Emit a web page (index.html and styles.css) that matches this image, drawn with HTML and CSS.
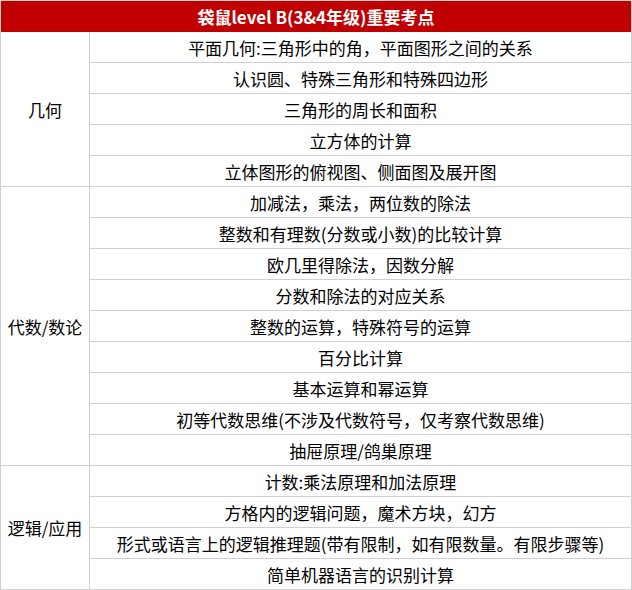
FILE: index.html
```html
<!DOCTYPE html>
<html lang="zh-CN">
<head>
<meta charset="utf-8">
<title>袋鼠level B重要考点</title>
<link rel="stylesheet" href="styles.css">
</head>
<body>
<div class="sheet">
  <div class="title">袋鼠level B(3&amp;4年级)重要考点</div>
  <section class="group">
    <div class="cat">几何</div>
    <div class="items">
      <div class="item">平面几何:三角形中的角，平面图形之间的关系</div>
      <div class="item">认识圆、特殊三角形和特殊四边形</div>
      <div class="item">三角形的周长和面积</div>
      <div class="item">立方体的计算</div>
      <div class="item">立体图形的俯视图、侧面图及展开图</div>
    </div>
  </section>
  <section class="group">
    <div class="cat">代数/数论</div>
    <div class="items">
      <div class="item">加减法，乘法，两位数的除法</div>
      <div class="item">整数和有理数(分数或小数)的比较计算</div>
      <div class="item">欧几里得除法，因数分解</div>
      <div class="item">分数和除法的对应关系</div>
      <div class="item">整数的运算，特殊符号的运算</div>
      <div class="item">百分比计算</div>
      <div class="item">基本运算和幂运算</div>
      <div class="item">初等代数思维(不涉及代数符号，仅考察代数思维)</div>
      <div class="item">抽屉原理/鸽巢原理</div>
    </div>
  </section>
  <section class="group">
    <div class="cat">逻辑/应用</div>
    <div class="items">
      <div class="item">计数:乘法原理和加法原理</div>
      <div class="item">方格内的逻辑问题，魔术方块，幻方</div>
      <div class="item">形式或语言上的逻辑推理题(带有限制，如有限数量。有限步骤等)</div>
      <div class="item">简单机器语言的识别计算</div>
    </div>
  </section>
</div>
</body>
</html>
```

FILE: styles.css
```css
html, body {
  margin: 0;
  padding: 0;
  background: #ffffff;
}

body {
  font-family: "Noto Sans CJK SC", "Liberation Sans", sans-serif;
  font-size: 17px;
  color: #000000;
}

.sheet {
  width: 632px;
  box-sizing: border-box;
  border-top: 1px solid #d0d0d0;
  border-left: 1px solid #d0d0d0;
  border-right: 1px solid #d0d0d0;
}

.title {
  height: 31px;
  background: #c00000;
  color: #ffffff;
  font-weight: bold;
  display: flex;
  align-items: center;
  justify-content: center;
  line-height: 1;
}

.group {
  display: flex;
}

.cat {
  width: 89px;
  flex: none;
  box-sizing: border-box;
  border-right: 1px solid #d0d0d0;
  border-bottom: 1px solid #d0d0d0;
  display: flex;
  align-items: center;
  justify-content: center;
  line-height: 1;
}

.items {
  flex: 1;
  display: flex;
  flex-direction: column;
}

.item {
  height: 31px;
  box-sizing: border-box;
  border-bottom: 1px solid #d0d0d0;
  display: flex;
  align-items: center;
  justify-content: center;
  line-height: 1;
  white-space: nowrap;
}
```
